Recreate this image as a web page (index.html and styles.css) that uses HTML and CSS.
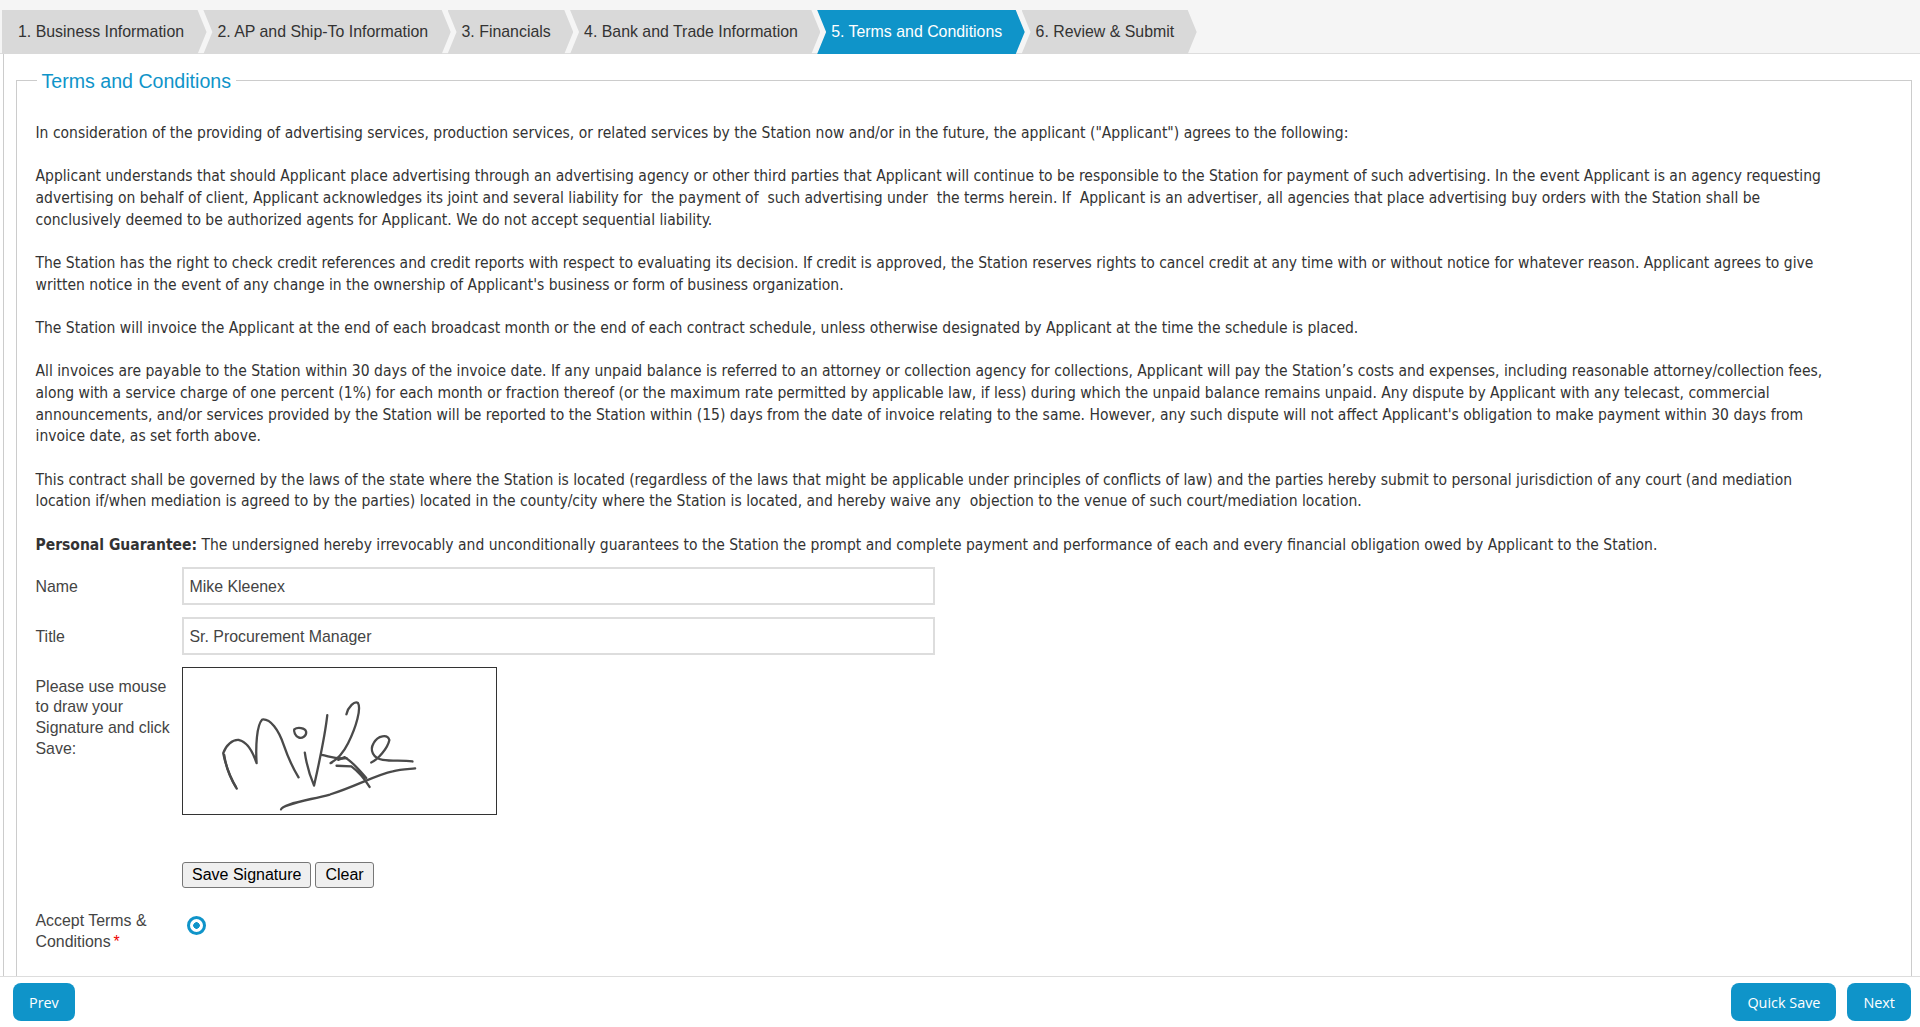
FILE: index.html
```html
<!DOCTYPE html>
<html lang="en">
<head>
    <meta charset="UTF-8">
    <title>Credit Application - Terms and Conditions</title>
    <link rel="stylesheet" href="styles.css">
</head>
<body>
    <!-- wizard steps -->
    <div class="step-bar">
        <a class="step step-first">1. Business Information</a>
        <a class="step">2. AP and Ship-To Information</a>
        <a class="step">3. Financials</a>
        <a class="step">4. Bank and Trade Information</a>
        <a class="step step-active">5. Terms and Conditions</a>
        <a class="step">6. Review &amp; Submit</a>
    </div>

    <div class="page-body">
        <fieldset class="terms-box">
            <legend>Terms and Conditions</legend>
            <div class="terms-text">
                <p>In consideration of the providing of advertising services, production services, or related services by the Station now and/or in the future, the applicant ("Applicant") agrees to the following:</p>
                <p>Applicant understands that should Applicant place advertising through an advertising agency or other third parties that Applicant will continue to be responsible to the Station for payment of such advertising. In the event Applicant is an agency requesting advertising on behalf of client, Applicant acknowledges its joint and several liability for &nbsp;the payment of &nbsp;such advertising under &nbsp;the terms herein. If &nbsp;Applicant is an advertiser, all agencies that place advertising buy orders with the Station shall be conclusively deemed to be authorized agents for Applicant. We do not accept sequential liability.</p>
                <p>The Station has the right to check credit references and credit reports with respect to evaluating its decision. If credit is approved, the Station reserves rights to cancel credit at any time with or without notice for whatever reason. Applicant agrees to give written notice in the event of any change in the ownership of Applicant's business or form of business organization.</p>
                <p>The Station will invoice the Applicant at the end of each broadcast month or the end of each contract schedule, unless otherwise designated by Applicant at the time the schedule is placed.</p>
                <p>All invoices are payable to the Station within 30 days of the invoice date. If any unpaid balance is referred to an attorney or collection agency for collections, Applicant will pay the Station’s costs and expenses, including reasonable attorney/collection fees, along with a service charge of one percent (1%) for each month or fraction thereof (or the maximum rate permitted by applicable law, if less) during which the unpaid balance remains unpaid. Any dispute by Applicant with any telecast, commercial announcements, and/or services provided by the Station will be reported to the Station within (15) days from the date of invoice relating to the same. However, any such dispute will not affect Applicant's obligation to make payment within 30 days from invoice date, as set forth above.</p>
                <p>This contract shall be governed by the laws of the state where the Station is located (regardless of the laws that might be applicable under principles of conflicts of law) and the parties hereby submit to personal jurisdiction of any court (and mediation location if/when mediation is agreed to by the parties) located in the county/city where the Station is located, and hereby waive any &nbsp;objection to the venue of such court/mediation location.</p>
                <p><strong>Personal Guarantee:</strong> The undersigned hereby irrevocably and unconditionally guarantees to the Station the prompt and complete payment and performance of each and every financial obligation owed by Applicant to the Station.</p>
            </div>

            <div class="form-row">
                <label class="form-label">Name</label>
                <input class="text-input" type="text" value="Mike Kleenex">
            </div>
            <div class="form-row title-row">
                <label class="form-label">Title</label>
                <input class="text-input" type="text" value="Sr. Procurement Manager">
            </div>
            <div class="form-row">
                <label class="form-label">Please use mouse to draw your Signature and click Save:</label>
                <div class="signature-pad">
                    <svg class="signature" viewBox="37 22 944 442">
                        <path d="M198 387C185 365 165 320 157 280C165 255 185 238 205 240C230 245 248 280 258 310C255 260 258 195 275 178C300 175 325 210 340 255C352 290 368 325 385 353"/>
                        <path d="M160 285C165 320 175 350 195 382"/>
                        <path d="M372 208C382 200 405 203 408 215C410 228 395 237 385 232C375 228 370 215 372 208"/>
                        <path d="M472 165C465 230 445 320 432 378C420 350 410 320 404 278"/>
                        <path d="M455 285C480 290 500 300 530 295"/>
                        <path d="M530 162C535 140 555 120 565 128C575 145 560 200 535 250C525 270 510 295 482 310"/>
                        <path d="M505 300L525 292C540 300 560 320 590 355M500 318L545 320C565 335 580 350 600 382"/>
                        <path d="M605 308C625 300 655 265 660 240C655 222 625 225 612 250C600 270 610 295 640 300C670 305 700 300 730 305"/>
                        <path d="M332 450C335 435 400 425 480 405C560 380 620 345 670 335C695 328 720 328 738 326"/>
                    </svg>
                </div>
            </div>
            <div class="form-row sign-buttons">
                <span class="form-label"></span>
                <button class="plain-button" type="button">Save Signature</button>
                <button class="plain-button" type="button">Clear</button>
            </div>
            <div class="form-row accept-row">
                <label class="form-label">Accept Terms &amp;<br>Conditions<span class="required">*</span></label>
                <input class="radio-input" type="radio" checked>
            </div>
        </fieldset>
    </div>

    <div class="footer-bar">
        <button class="nav-button" type="button">Prev</button>
        <div class="footer-right">
            <button class="nav-button" type="button">Quick Save</button>
            <button class="nav-button" type="button">Next</button>
        </div>
    </div>
</body>
</html>
```

FILE: styles.css
```css
/* base */
body {
    margin: 0;
    font-family: "Liberation Sans", Arial, sans-serif;
    font-size: 15.9px;
    color: #444;
    background: #fff;
    display: flex;
    flex-direction: column;
    height: 100vh;
    overflow: hidden;
}

/* wizard steps */
.step-bar {
    display: flex;
    align-items: flex-start;
    flex: none;
    height: 54px;
    box-sizing: border-box;
    padding: 10px 0 0 2px;
    background: #f5f5f5;
    border-bottom: 1px solid #ddd;
}

.step {
    display: flex;
    align-items: center;
    height: 44px;
    padding: 0 22.5px 0 14px;
    margin-right: -3.2px;
    background: #d9d9d9;
    color: #333;
    white-space: nowrap;
    clip-path: polygon(0 0, calc(100% - 9px) 0, 100% 50%, calc(100% - 9px) 100%, 0 100%, 9px 50%);
}

.step-first {
    padding-left: 16px;
    clip-path: polygon(0 0, calc(100% - 9px) 0, 100% 50%, calc(100% - 9px) 100%, 0 100%);
}

.step-active {
    background: #0f94c9;
    color: #fff;
}

/* content */
.page-body {
    flex: 1;
    min-height: 0;
    overflow: hidden;
    margin-left: 3px;
    padding: 0 8px 0 12px;
    border-left: 1px solid #ccc;
}

.terms-box {
    margin: 13px 0 0;
    padding: 0 18px 60px 18.5px;
    border: 1px solid #ccc;
    border-bottom: 0;
}

.terms-box legend {
    margin-left: 1px;
    padding: 2px 5px 0;
    font-size: 19.6px;
    line-height: 24px;
    color: #0f94c9;
}

.terms-text {
    font-family: "DejaVu Sans Condensed", "DejaVu Sans", sans-serif;
    font-stretch: condensed;
    font-size: 15.5px;
    line-height: 21.67px;
    color: #333;
    padding: 30px 58px 0 0;
}

.terms-text p {
    margin: 0 0 21.67px;
}

.terms-text p:last-child {
    margin-bottom: 10.2px;
}

/* form rows */
.form-row {
    display: flex;
    align-items: flex-start;
    margin-bottom: 12.5px;
    line-height: 20.7px;
}

.title-row {
    margin-bottom: 11.5px;
}

.form-label {
    flex: none;
    width: 146.5px;
    padding-top: 10px;
}

.text-input {
    width: 753px;
    height: 38px;
    box-sizing: border-box;
    padding: 4px 5.5px 2px;
    border: 2px solid #ddd;
    font-family: inherit;
    font-size: 15.9px;
    color: #444;
    background: #fff;
}

.signature-pad {
    width: 315px;
    height: 148px;
    box-sizing: border-box;
    border: 1px solid #333;
    background: #fff;
}

.signature {
    display: block;
    width: 100%;
    height: 100%;
    fill: none;
    stroke: #4a4a4a;
    stroke-width: 7;
    stroke-linecap: round;
    stroke-linejoin: round;
}

.sign-buttons {
    margin-top: 47px;
    margin-bottom: 22px;
}

.sign-buttons .form-label {
    padding: 0;
}

.plain-button {
    height: 26px;
    padding: 0 9px;
    margin-right: 4px;
    border: 1px solid #777;
    border-radius: 3px;
    background: #efefef;
    color: #000;
    font-family: inherit;
    font-size: 16px;
}

.accept-row .form-label {
    padding-top: 1.5px;
    width: 130px;
    margin-right: 16.5px;
}

.required {
    color: #e00;
    margin-left: 3px;
}

.radio-input {
    appearance: none;
    width: 19px;
    height: 19px;
    box-sizing: border-box;
    margin: 6px 0 0 5px;
    border: 3px solid #0f94c9;
    border-radius: 50%;
    background: radial-gradient(circle, #0f94c9 0 3px, #fff 3.5px);
}

/* footer */
.footer-bar {
    flex: none;
    height: 51px;
    box-sizing: border-box;
    display: flex;
    justify-content: space-between;
    align-items: flex-start;
    padding: 6px 9px 0 13px;
    background: #fff;
    border-top: 1px solid #ddd;
}

.footer-right {
    display: flex;
    gap: 11px;
}

.nav-button {
    height: 38px;
    padding: 0 16px;
    border: 0;
    border-radius: 8px;
    background: #0f94c9;
    color: #fff;
    font-family: "Open Sans", sans-serif;
    font-size: 14.4px;
}
```
